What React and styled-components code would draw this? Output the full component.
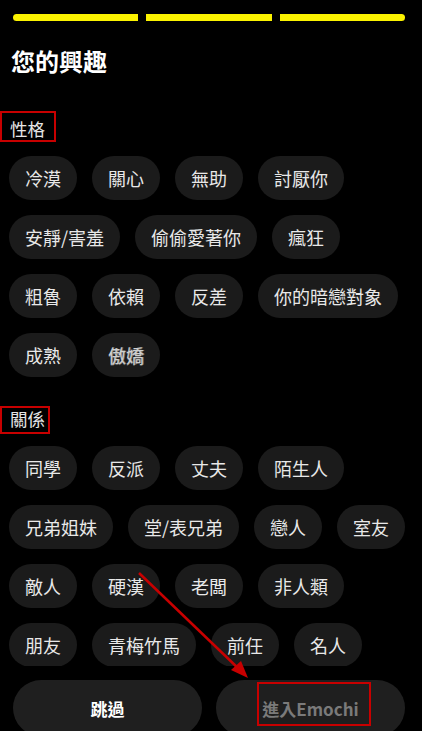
import React from "react";
import styled, { createGlobalStyle } from "styled-components";

const personality = [
	"冷漠", "關心", "無助", "討厭你",
	"安靜/害羞", "偷偷愛著你", "瘋狂",
	"粗魯", "依賴", "反差", "你的暗戀對象",
	"成熟", "傲嬌"
];

const relations = [
	"同學", "反派", "丈夫", "陌生人",
	"兄弟姐妹", "堂/表兄弟", "戀人", "室友",
	"敵人", "硬漢", "老闆", "非人類",
	"朋友", "青梅竹馬", "前任", "名人"
];

const App = () => {
	return (
		<>
			<Global />
			<Page>
				<Progress>
					<Segment $pos="first" />
					<Segment />
					<Segment $pos="last" />
				</Progress>
				<Title>您的興趣</Title>
				<Scroll>
					<Label>性格</Label>
					<ChipList>
						{personality.map((p) => (
							<Chip key={p} $ghost={p === "傲嬌"}>{p}</Chip>
						))}
					</ChipList>
					<Label $gap>關係</Label>
					<ChipList>
						{relations.map((r) => (
							<Chip key={r}>{r}</Chip>
						))}
					</ChipList>
				</Scroll>
				<Footer>
					<Button>跳過</Button>
					<Button $disabled>進入Emochi</Button>
				</Footer>

				<Mark $x={0} $y={111} $w={56} $h={31} />
				<Mark $x={0} $y={406} $w={50} $h={28} />
				<Mark $x={257} $y={682} $w={114} $h={44} />
				<Arrow width="422" height="731" viewBox="0 0 422 731">
					<line x1="139" y1="573" x2="240" y2="670" stroke="#c80000" strokeWidth="2.5" />
					<polygon points="248,678 231,670 241,661" fill="#c80000" />
				</Arrow>
			</Page>
		</>
	);
};

export default App;

const Global = createGlobalStyle`
	html, body {
		margin: 0;
		padding: 0;
		background: #000;
	}
	body {
		font-family: "Noto Sans CJK TC", "Noto Sans", sans-serif;
	}
`

const Page = styled.div`
	position: relative;
	width: 422px;
	height: 731px;
	overflow: hidden;
	background: #000;
	display: flex;
	flex-direction: column;
`
const Progress = styled.div`
	display: flex;
	gap: 8px;
	padding: 14px 17px 0 13px;
`
const Segment = styled.div`
	flex: 1;
	height: 7px;
	background: #fbf200;
	border-radius: ${({ $pos }) =>
		$pos === "first" ? "4px 0 0 4px" : $pos === "last" ? "0 4px 4px 0" : "0"};
`
const Title = styled.h1`
	margin: 24px 0 0 11px;
	font-size: 24px;
	line-height: 32px;
	font-weight: 700;
	color: #fff;
`
const Scroll = styled.div`
	flex: 1;
	overflow: hidden;
	display: flex;
	flex-direction: column;
`
const Label = styled.div`
	margin: ${({ $gap }) => ($gap ? "30px" : "40px")} 0 0 10px;
	font-size: 17.5px;
	line-height: 24px;
	color: #e6e6e6;
`
const ChipList = styled.div`
	display: flex;
	flex-wrap: wrap;
	gap: 15px 15px;
	margin-top: 15px;
	padding: 0 12px 0 9px;
`
const Chip = styled.div`
	height: 44px;
	padding: 0 16px;
	border-radius: 22px;
	background: #1b1b1b;
	color: #e8e8e8;
	font-size: 18px;
	line-height: 44px;
	white-space: nowrap;
	${({ $ghost }) => $ghost && `
		color: #cfcfcf;
		text-shadow: 1px 0 0 rgba(255,255,255,0.4), 0 1px 0 rgba(255,255,255,0.3);
	`}
`
const Footer = styled.div`
	height: 65px;
	flex-shrink: 0;
	display: flex;
	gap: 14px;
	padding: 14px 17px 0 13px;
	box-sizing: border-box;
`
const Button = styled.div`
	flex: 1;
	height: 56px;
	border-radius: 28px;
	background: #1f1f1f;
	display: flex;
	align-items: center;
	justify-content: center;
	font-size: 17px;
	font-weight: 700;
	color: ${({ $disabled }) => ($disabled ? "#7a7a7a" : "#fff")};
`
const Mark = styled.div`
	position: absolute;
	left: ${({ $x }) => $x}px;
	top: ${({ $y }) => $y}px;
	width: ${({ $w }) => $w}px;
	height: ${({ $h }) => $h}px;
	box-sizing: border-box;
	border: 2px solid #c80000;
	pointer-events: none;
`
const Arrow = styled.svg`
	position: absolute;
	left: 0;
	top: 0;
	pointer-events: none;
`
